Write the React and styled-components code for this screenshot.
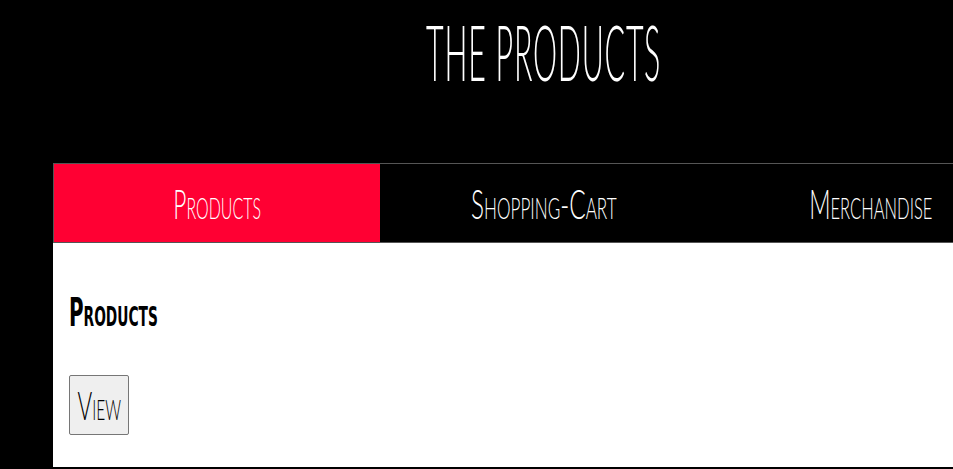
import React from "react";
import styled, { createGlobalStyle } from "styled-components";

const Global = createGlobalStyle`
  html, body { margin: 0; padding: 0; background: #000; overflow: hidden; }
  body { font-family: Lato, "DejaVu Sans", sans-serif; -webkit-font-smoothing: antialiased; }
`;

const Wrapper = styled.div`
  width: 981px;
  margin-left: 53px;
`;

const Header = styled.header`
  height: 163px;
  display: flex;
  justify-content: center;
  align-items: flex-start;
  padding-top: 23px;
  box-sizing: border-box;
`;

const Scaled = styled.span`
  display: inline-block;
  transform: scale(${(p) => p.$sx || 1}, ${(p) => p.$sy || 1});
  transform-origin: ${(p) => p.$origin || "center center"};
  white-space: nowrap;
`;

const Title = styled.h1`
  margin: 0;
  color: #fff;
  font-weight: 300;
  font-size: 40px;
  line-height: 58px;
  letter-spacing: 1px;
  text-transform: uppercase;
`;

const TabBar = styled.nav`
  display: grid;
  grid-template-columns: 326px 327px 327px;
  height: 78px;
  border: 1px solid #555;
  border-right: none;
`;

const Tab = styled.div`
  display: flex;
  align-items: center;
  justify-content: center;
  background: ${(p) => (p.$active ? "#ff0033" : "#000")};
  color: #fff;
  font-size: 27px;
  font-weight: 300;
  font-variant: small-caps;
`;

const Content = styled.main`
  background: #fff;
  height: 224px;
  padding: 49px 16px 0;
  box-sizing: border-box;
`;

const Heading = styled.h2`
  margin: 0;
  font-family: "DejaVu Sans Condensed", "DejaVu Sans", sans-serif;
  font-stretch: condensed;
  font-size: 26px;
  font-weight: 700;
  font-variant: small-caps;
  line-height: 40px;
  color: #000;
`;

const Button = styled.button`
  margin-top: 43px;
  width: 60px;
  height: 60px;
  padding: 0;
  background: #efefef;
  border: 1px solid #767676;
  border-radius: 2px;
  font-family: inherit;
  font-size: 26px;
  font-weight: 300;
  font-variant: small-caps;
  color: #000;
  display: flex;
  align-items: center;
  justify-content: center;
`;

export default function App() {
  return (
    <>
      <Global />
      <Wrapper>
        <Header>
          <Title>
            <Scaled $sx={0.76} $sy={1.9}>The Products</Scaled>
          </Title>
        </Header>
        <TabBar>
          <Tab $active>
            <Scaled $sx={0.84} $sy={1.5}>Products</Scaled>
          </Tab>
          <Tab>
            <Scaled $sx={0.9} $sy={1.5}>Shopping-Cart</Scaled>
          </Tab>
          <Tab>
            <Scaled $sx={0.87} $sy={1.5}>Merchandise</Scaled>
          </Tab>
        </TabBar>
        <Content>
          <Heading>
            <Scaled $sx={0.85} $sy={1.5} $origin="left center">Products</Scaled>
          </Heading>
          <Button>
            <Scaled $sx={0.86} $sy={1.5}>View</Scaled>
          </Button>
        </Content>
      </Wrapper>
    </>
  );
}
